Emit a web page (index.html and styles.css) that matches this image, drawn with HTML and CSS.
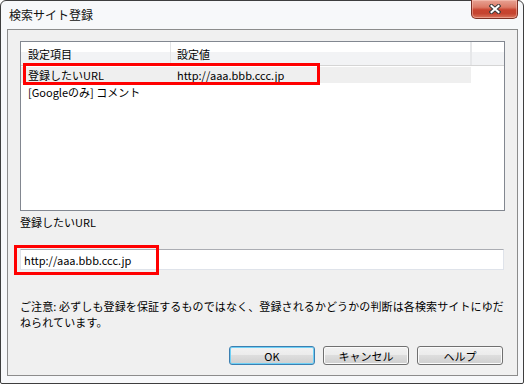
FILE: index.html
```html
<!DOCTYPE html>
<html lang="ja">
<head>
<meta charset="utf-8">
<title>検索サイト登録</title>
<link rel="stylesheet" href="styles.css">
</head>
<body>
<div class="window">
  <div class="titlebar">検索サイト登録</div>
  <div class="close">
    <svg width="12" height="10" viewBox="0 0 12 10">
      <path d="M2.5 2 L9.5 8 M9.5 2 L2.5 8" stroke="#3a3a3a" stroke-width="4" stroke-linecap="square"/>
      <path d="M2.5 2 L9.5 8 M9.5 2 L2.5 8" stroke="#ffffff" stroke-width="2" stroke-linecap="square"/>
    </svg>
  </div>
  <div class="client">
    <div class="listview">
      <div class="header">
        <div class="hcell col1">設定項目</div>
        <div class="hcell col2">設定値</div>
      </div>
      <div class="row selected">
        <div class="cell col1">登録したいURL</div>
        <div class="cell col2">http://aaa.bbb.ccc.jp</div>
      </div>
      <div class="row">
        <div class="cell col1">[Googleのみ] コメント</div>
        <div class="cell col2"></div>
      </div>
    </div>
    <div class="label">登録したいURL</div>
    <input class="textbox" type="text" value="http://aaa.bbb.ccc.jp">
    <p class="notice">ご注意: 必ずしも登録を保証するものではなく、登録されるかどうかの判断は各検索サイトにゆだ<br>ねられています。</p>
    <div class="buttons">
      <button class="btn default">OK</button>
      <button class="btn">キャンセル</button>
      <button class="btn">ヘルプ</button>
    </div>
  </div>
  <div class="mark mark-row"></div>
  <div class="mark mark-input"></div>
</div>
</body>
</html>
```

FILE: styles.css
```css
html, body {
  margin: 0;
  padding: 0;
}

body {
  width: 525px;
  height: 385px;
  background: #ffffff;
  font-family: "Noto Sans CJK JP", "Noto Sans", sans-serif;
  font-size: 11px;
  color: #000;
  overflow: hidden;
}

.window {
  position: relative;
  box-sizing: border-box;
  width: 524px;
  height: 384px;
  border: 1px solid #3e3e3e;
  border-radius: 6px 6px 2px 2px;
  background: #f7f8fa;
  display: flex;
  flex-direction: column;
}

.titlebar {
  height: 28px;
  display: flex;
  align-items: center;
  padding-left: 8px;
  font-size: 12px;
  line-height: 14px;
  color: #111;
}

.close {
  position: absolute;
  top: -1px;
  right: 5px;
  box-sizing: border-box;
  width: 47px;
  height: 19px;
  border: 1px solid #7d3024;
  border-top: none;
  border-radius: 0 0 5px 5px;
  background: linear-gradient(#e8a394 0%, #dc7a66 40%, #c8432f 55%, #c54430 75%, #d9745c 100%);
  box-shadow: inset 0 0 0 1px rgba(255, 210, 200, 0.45);
  display: flex;
  align-items: center;
  justify-content: center;
}

.close svg {
  display: block;
}

.client {
  box-sizing: border-box;
  margin-left: 6px;
  width: 511px;
  height: 347px;
  border: 1px solid #8c8c8c;
  background: #f0f0f0;
  padding: 11px 12px 0 12px;
  display: flex;
  flex-direction: column;
}

.listview {
  box-sizing: border-box;
  width: 485px;
  height: 170px;
  border: 1px solid #828790;
  background: #ffffff;
}

.header {
  box-sizing: border-box;
  display: flex;
  height: 24px;
  border-bottom: 1px solid #d5d5d5;
  background: linear-gradient(#ffffff 0%, #ffffff 45%, #f2f3f5 45%, #f2f3f5 100%);
}

.hcell {
  box-sizing: border-box;
  display: flex;
  align-items: center;
  line-height: 14px;
  border-right: 1px solid #e3e4e6;
}

.col1 {
  width: 150px;
  padding-left: 7px;
}

.col2 {
  width: 300px;
  padding-left: 6px;
}

.hcell.col2 {
  border-right: 2px solid #e6e7e9;
  width: 301px;
}

.row {
  display: flex;
  height: 16px;
  margin-top: 1px;
  width: 450px;
}

.row.selected {
  background: #efefef;
}

.cell {
  box-sizing: border-box;
  display: flex;
  align-items: center;
  line-height: 14px;
  white-space: nowrap;
}

.label {
  margin-top: 4px;
  line-height: 14px;
}

.textbox {
  box-sizing: border-box;
  margin: 20px 0 0 0;
  width: 484px;
  height: 21px;
  padding: 0 3px;
  border: 1px solid #dfe3ea;
  border-top-color: #abadb3;
  background: #ffffff;
  font-family: inherit;
  font-size: 11px;
  color: #000;
  outline: none;
}

.notice {
  margin: 28px 0 0 0;
  line-height: 16px;
  letter-spacing: 0.12px;
  white-space: nowrap;
}

.buttons {
  margin-top: 16px;
  width: 483px;
  display: flex;
  justify-content: flex-end;
  gap: 8px;
}

.btn {
  box-sizing: border-box;
  width: 86px;
  height: 19px;
  padding: 0;
  border: 1px solid #707070;
  border-radius: 3px;
  background: linear-gradient(#f2f2f2 0%, #ebebeb 50%, #dddddd 50%, #cfcfcf 100%);
  box-shadow: inset 0 0 0 1px #fbfbfb;
  font-family: inherit;
  font-size: 11px;
  line-height: 14px;
  color: #000;
}

.btn.default {
  border-color: #3c7fb1;
  box-shadow: inset 0 0 0 1px #6fd0f5;
}

.mark {
  position: absolute;
  box-sizing: border-box;
  border: 3px solid #ff0000;
}

.mark-row {
  left: 22px;
  top: 62px;
  width: 297px;
  height: 22px;
}

.mark-input {
  left: 13px;
  top: 244px;
  width: 145px;
  height: 30px;
}
```
